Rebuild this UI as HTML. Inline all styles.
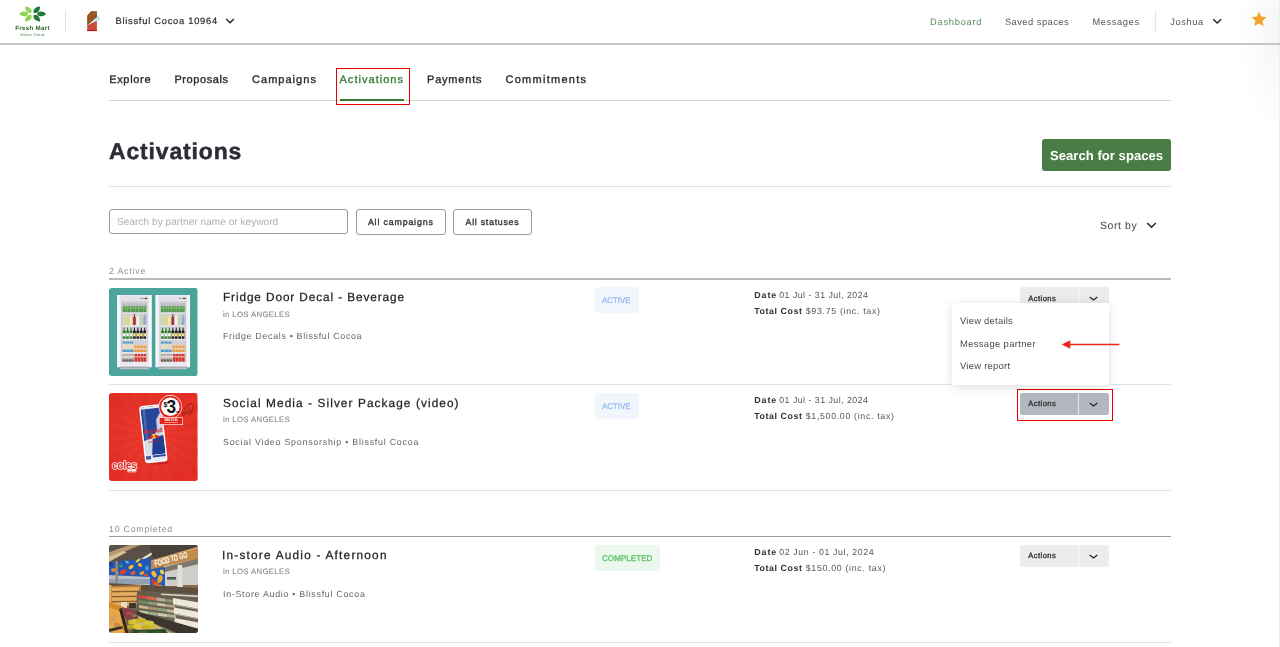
<!DOCTYPE html>
<html lang="en">
<head>
<meta charset="utf-8">
<title>Activations</title>
<style>
html,body{margin:0;padding:0;background:#fff;}
body{width:1280px;height:647px;overflow:hidden;position:relative;font-family:"Liberation Sans",sans-serif;}
.t{position:absolute;white-space:nowrap;line-height:1;text-rendering:geometricPrecision;}
.b{position:absolute;}
.ln{position:absolute;left:108.6px;width:1062.6px;height:1px;background:#e2e2e2;}
.img{position:absolute;left:109px;width:88.5px;height:88.4px;border-radius:3px;overflow:hidden;}
.img svg{display:block;width:100%;height:100%;}
.badge{position:absolute;left:594.5px;height:26px;border-radius:3px;}
.act{position:absolute;left:1019.6px;width:89.4px;height:22.3px;border-radius:2.5px;background:#ececec;}
.act i{position:absolute;left:58.2px;top:0;width:1.2px;height:100%;background:#fafafa;}
.rb{position:absolute;box-sizing:border-box;border:1.5px solid #e80000;}
svg{position:absolute;overflow:visible;}
</style>
</head>
<body>
<!-- right edge shade -->
<div class="b" style="left:1160px;top:0;width:120px;height:160px;background:radial-gradient(ellipse 42px 100px at 120px 35px,rgba(0,0,0,0.04) 0%,rgba(0,0,0,0.018) 50%,rgba(0,0,0,0) 100%);"></div>
<div class="b" style="left:1279px;top:0;width:1px;height:647px;background:#efefef;"></div>

<!-- header -->
<div class="b" style="left:0;top:43px;width:1280px;height:1.5px;background:#c6c6c6;"></div>
<svg style="left:0;top:0" width="60" height="40" viewBox="0 0 60 40"><path transform="rotate(180 32.6 13.9) translate(32.6 13.9)" d="M4.3,0 C5.8,-3.1 10.35,-3.1 13.4,0 C10.35,3.1 5.8,3.1 4.3,0Z" fill="#8fd352"/><path transform="rotate(-135 32.6 13.9) translate(32.6 13.9)" d="M1.6,0 C3.1,-3.1 7.6,-3.1 10.6,0 C7.6,3.1 3.1,3.1 1.6,0Z" fill="#8fd352"/><path transform="rotate(135 32.6 13.9) translate(32.6 13.9)" d="M1.6,0 C3.1,-3.1 7.6,-3.1 10.6,0 C7.6,3.1 3.1,3.1 1.6,0Z" fill="#8fd352"/><path transform="rotate(0 32.6 13.9) translate(32.6 13.9)" d="M4.3,0 C5.8,-3.1 10.35,-3.1 13.4,0 C10.35,3.1 5.8,3.1 4.3,0Z" fill="#1e7a33"/><path transform="rotate(-45 32.6 13.9) translate(32.6 13.9)" d="M1.6,0 C3.1,-3.1 7.6,-3.1 10.6,0 C7.6,3.1 3.1,3.1 1.6,0Z" fill="#1e7a33"/><path transform="rotate(45 32.6 13.9) translate(32.6 13.9)" d="M1.6,0 C3.1,-3.1 7.6,-3.1 10.6,0 C7.6,3.1 3.1,3.1 1.6,0Z" fill="#1e7a33"/></svg>
<div class="b" style="left:65px;top:10px;width:1px;height:22px;background:#e4e4e4;"></div>
<svg style="left:0;top:0" width="110" height="40" viewBox="0 0 110 40"><polygon points="96.9,14.6 100.7,18.7 96.9,21.6 88,25.3 90,22" fill="#c4e7ef"/><polygon points="87.2,15.6 91.3,11.2 96.9,11.2 96.9,16.9 87.2,25.2" fill="#8a4b17"/><path d="M88.6,16.6 91.6,13.2 91.6,16.2 88.6,19.4Z M92.5,12.4 95.8,12.4 95.8,15.4 92.5,15.6Z M88.6,20.6 91.6,17.4 91.6,19.6 88.6,22.6Z M92.5,16.8 95.8,16.4 95.8,16.6 92.5,19Z" fill="#a8632c"/><polygon points="87.2,25.3 96.9,21.1 96.9,31.1 87.2,31.1" fill="#c94c3d"/><rect x="87.2" y="30" width="9.7" height="1.1" fill="#b21d12"/></svg>
<svg style="left:225px;top:17px" width="10" height="8" viewBox="0 0 10 8"><polyline points="1.2,2 5,5.8 8.8,2" fill="none" stroke="#222" stroke-width="1.4"/></svg>
<div class="b" style="left:1155px;top:10.7px;width:1px;height:21px;background:#e4e4e4;"></div>
<svg style="left:1212px;top:17px" width="10" height="8" viewBox="0 0 10 8"><polyline points="1.2,2.2 5.2,6 9.2,2.2" fill="none" stroke="#222" stroke-width="1.4"/></svg>
<svg style="left:1251px;top:11px" width="16" height="16" viewBox="0 0 16 16"><polygon points="8,0.6 10.2,5.6 15.6,6.2 11.5,9.8 12.7,15.1 8,12.4 3.3,15.1 4.5,9.8 0.4,6.2 5.8,5.6" fill="#f0a62e"/></svg>

<!-- tabs -->
<div class="ln" style="top:100px;background:#d6d6d6;"></div>
<div class="b" style="left:339.5px;top:99.2px;width:64px;height:1.5px;background:#3a7d34;"></div>
<div class="rb" style="left:336px;top:68px;width:74px;height:37px;"></div>

<!-- heading -->
<div class="b" style="left:1041.5px;top:139px;width:129.7px;height:31.5px;border-radius:3px;background:#4a7c45;"></div>
<div class="ln" style="top:186px;"></div>

<!-- filters -->
<div class="b" style="left:108.5px;top:209px;width:239.5px;height:24.6px;box-sizing:border-box;border:1px solid #9a9a9a;border-radius:3px;"></div>
<div class="b" style="left:355.6px;top:209px;width:90px;height:25.6px;box-sizing:border-box;border:1px solid #9a9a9a;border-radius:3px;"></div>
<div class="b" style="left:453.2px;top:209px;width:78.8px;height:25.6px;box-sizing:border-box;border:1px solid #9a9a9a;border-radius:3px;"></div>
<svg style="left:1145.5px;top:221px" width="11" height="8" viewBox="0 0 11 8"><polyline points="1.2,2 5.5,6.2 9.8,2" fill="none" stroke="#222" stroke-width="1.5"/></svg>

<!-- section lines -->
<div class="ln" style="top:278.3px;height:1.7px;background:#b9b9b9;"></div>
<div class="ln" style="top:384px;"></div>
<div class="ln" style="top:490px;"></div>
<div class="ln" style="top:536px;background:#9a9a9a;"></div>
<div class="ln" style="top:642px;"></div>

<!-- images -->
<div class="img" style="top:287.5px;"><svg viewBox="0 0 88.5 88.4" preserveAspectRatio="none" style="position:static"><rect width="88.5" height="88.4" fill="#4ba59b"/><rect x="8.2" y="7" width="34.4" height="72.2" fill="#ebe9f1"/><rect x="8.2" y="7" width="2.6" height="72.2" fill="#f7f6fa"/><rect x="39.99999999999999" y="7" width="2.6" height="72.2" fill="#f7f6fa"/><rect x="10.799999999999999" y="8.2" width="29.2" height="4.6" fill="#e2e0ea"/><rect x="31.599999999999994" y="10" width="1.6" height="1" fill="#e07070"/><rect x="33.39999999999999" y="10" width="1.6" height="1" fill="#70c070"/><rect x="35.599999999999994" y="9.9" width="2.6" height="1.2" fill="#333"/><rect x="38.199999999999996" y="9.9" width="1.2" height="1.2" fill="#e8d040"/><rect x="11.2" y="78.6" width="28.4" height="2.6" fill="#a9a9af"/><rect x="11.2" y="80.4" width="28.4" height="0.8" fill="#c9c9cf"/><rect x="12.2" y="13.4" width="26.4" height="60.6" fill="#c3c5cb"/><rect x="13.0" y="14.2" width="24.799999999999997" height="59" fill="#cfd1d6"/><rect x="12.799999999999999" y="24.3" width="25.2" height="1.3" fill="#e6e8ee"/><rect x="12.799999999999999" y="37.2" width="25.2" height="1.3" fill="#e6e8ee"/><rect x="12.799999999999999" y="50.9" width="25.2" height="1.3" fill="#e6e8ee"/><rect x="12.799999999999999" y="64.2" width="25.2" height="1.3" fill="#e6e8ee"/><rect x="13.65" y="15.4" width="2.17" height="3" fill="#b9bcc2"/><rect x="13.55" y="18.2" width="2.37" height="6" fill="#4f9a48"/><rect x="13.55" y="19.2" width="2.37" height="1.6" fill="#7ab86a"/><rect x="16.32" y="15.4" width="2.17" height="3" fill="#b9bcc2"/><rect x="16.22" y="18.2" width="2.37" height="6" fill="#4f9a48"/><rect x="16.22" y="19.2" width="2.37" height="1.6" fill="#7ab86a"/><rect x="18.98" y="15.4" width="2.17" height="3" fill="#b9bcc2"/><rect x="18.88" y="18.2" width="2.37" height="6" fill="#4f9a48"/><rect x="18.88" y="19.2" width="2.37" height="1.6" fill="#7ab86a"/><rect x="21.65" y="15.4" width="2.17" height="3" fill="#b9bcc2"/><rect x="21.55" y="18.2" width="2.37" height="6" fill="#4f9a48"/><rect x="21.55" y="19.2" width="2.37" height="1.6" fill="#7ab86a"/><rect x="24.32" y="15.4" width="2.17" height="3" fill="#b9bcc2"/><rect x="24.22" y="18.2" width="2.37" height="6" fill="#4f9a48"/><rect x="24.22" y="19.2" width="2.37" height="1.6" fill="#7ab86a"/><rect x="26.98" y="15.4" width="2.17" height="3" fill="#b9bcc2"/><rect x="26.88" y="18.2" width="2.37" height="6" fill="#4f9a48"/><rect x="26.88" y="19.2" width="2.37" height="1.6" fill="#7ab86a"/><rect x="29.65" y="15.4" width="2.17" height="3" fill="#b9bcc2"/><rect x="29.55" y="18.2" width="2.37" height="6" fill="#4f9a48"/><rect x="29.55" y="19.2" width="2.37" height="1.6" fill="#7ab86a"/><rect x="32.32" y="15.4" width="2.17" height="3" fill="#b9bcc2"/><rect x="32.22" y="18.2" width="2.37" height="6" fill="#4f9a48"/><rect x="32.22" y="19.2" width="2.37" height="1.6" fill="#7ab86a"/><rect x="34.98" y="15.4" width="2.17" height="3" fill="#b9bcc2"/><rect x="34.88" y="18.2" width="2.37" height="6" fill="#4f9a48"/><rect x="34.88" y="19.2" width="2.37" height="1.6" fill="#7ab86a"/><rect x="14.50" y="26.2" width="1.23" height="3.4" fill="#c9dcaa"/><rect x="13.75" y="29" width="2.73" height="8" rx="0.6" fill="#c9dcaa"/><rect x="17.93" y="26.2" width="1.23" height="3.4" fill="#ead27a"/><rect x="17.18" y="29" width="2.73" height="8" rx="0.6" fill="#ead27a"/><rect x="21.36" y="26.2" width="1.23" height="3.4" fill="#efe3b0"/><rect x="20.61" y="29" width="2.73" height="8" rx="0.6" fill="#efe3b0"/><rect x="24.79" y="26.2" width="1.23" height="3.4" fill="#a83232"/><rect x="24.04" y="29" width="2.73" height="8" rx="0.6" fill="#a83232"/><rect x="28.21" y="26.2" width="1.23" height="3.4" fill="#f0eeee"/><rect x="27.46" y="29" width="2.73" height="8" rx="0.6" fill="#f0eeee"/><rect x="31.64" y="26.2" width="1.23" height="3.4" fill="#bdd6a2"/><rect x="30.89" y="29" width="2.73" height="8" rx="0.6" fill="#bdd6a2"/><rect x="35.07" y="26.2" width="1.23" height="3.4" fill="#8eaad6"/><rect x="34.32" y="29" width="2.73" height="8" rx="0.6" fill="#8eaad6"/><rect x="14.60" y="39.6" width="1.03" height="3.6" fill="#2f7d2a"/><rect x="13.80" y="42.6" width="2.63" height="8.2" rx="0.6" fill="#2f7d2a"/><rect x="13.80" y="45.2" width="2.63" height="3.2" fill="#f4f4f0"/><rect x="18.03" y="39.6" width="1.03" height="3.6" fill="#2f7d2a"/><rect x="17.23" y="42.6" width="2.63" height="8.2" rx="0.6" fill="#2f7d2a"/><rect x="17.23" y="45.2" width="2.63" height="3.2" fill="#f4f4f0"/><rect x="21.46" y="39.6" width="1.03" height="3.6" fill="#2f7d2a"/><rect x="20.66" y="42.6" width="2.63" height="8.2" rx="0.6" fill="#2f7d2a"/><rect x="20.66" y="45.2" width="2.63" height="3.2" fill="#f4f4f0"/><rect x="24.89" y="39.6" width="1.03" height="3.6" fill="#1c1c1c"/><rect x="24.09" y="42.6" width="2.63" height="8.2" rx="0.6" fill="#1c1c1c"/><rect x="24.09" y="45.2" width="2.63" height="3.2" fill="#efe08a"/><rect x="28.31" y="39.6" width="1.03" height="3.6" fill="#1c1c1c"/><rect x="27.51" y="42.6" width="2.63" height="8.2" rx="0.6" fill="#1c1c1c"/><rect x="27.51" y="45.2" width="2.63" height="3.2" fill="#efe08a"/><rect x="31.74" y="39.6" width="1.03" height="3.6" fill="#1c1c1c"/><rect x="30.94" y="42.6" width="2.63" height="8.2" rx="0.6" fill="#1c1c1c"/><rect x="30.94" y="45.2" width="2.63" height="3.2" fill="#efe08a"/><rect x="35.17" y="39.6" width="1.03" height="3.6" fill="#1c1c1c"/><rect x="34.37" y="42.6" width="2.63" height="8.2" rx="0.6" fill="#1c1c1c"/><rect x="34.37" y="45.2" width="2.63" height="3.2" fill="#efe08a"/><rect x="13.60" y="53.6" width="3.28" height="10.4" fill="#e6ddc8"/><rect x="13.60" y="53.6" width="3.28" height="2" fill="#4a9bd2"/><rect x="13.60" y="61.6" width="3.28" height="2.4" fill="#4a9bd2"/><rect x="17.28" y="53.6" width="3.28" height="10.4" fill="#e6ddc8"/><rect x="17.28" y="53.6" width="3.28" height="2" fill="#4a9bd2"/><rect x="17.28" y="61.6" width="3.28" height="2.4" fill="#4a9bd2"/><rect x="20.96" y="53.6" width="3.28" height="10.4" fill="#e6ddc8"/><rect x="20.96" y="53.6" width="3.28" height="2" fill="#4a9bd2"/><rect x="20.96" y="61.6" width="3.28" height="2.4" fill="#4a9bd2"/><rect x="25.12" y="56.6" width="2.72" height="7.4" fill="#f0c9a0"/><rect x="25.12" y="58" width="2.72" height="1.6" fill="#e8973e"/><rect x="25.12" y="61.8" width="2.72" height="2.2" fill="#e8973e"/><rect x="28.24" y="56.6" width="2.72" height="7.4" fill="#f0c9a0"/><rect x="28.24" y="58" width="2.72" height="1.6" fill="#e8973e"/><rect x="28.24" y="61.8" width="2.72" height="2.2" fill="#e8973e"/><rect x="31.36" y="56.6" width="2.72" height="7.4" fill="#f0c9a0"/><rect x="31.36" y="58" width="2.72" height="1.6" fill="#e8973e"/><rect x="31.36" y="61.8" width="2.72" height="2.2" fill="#e8973e"/><rect x="34.48" y="56.6" width="2.72" height="7.4" fill="#f0c9a0"/><rect x="34.48" y="58" width="2.72" height="1.6" fill="#e8973e"/><rect x="34.48" y="61.8" width="2.72" height="2.2" fill="#e8973e"/><rect x="13.60" y="66" width="2.48" height="7.6" fill="#b9aea6"/><rect x="13.60" y="68" width="2.48" height="1.6" fill="#e9e4e0"/><rect x="13.60" y="71.4" width="2.48" height="2.2" fill="#6e635c"/><rect x="16.48" y="66" width="2.48" height="7.6" fill="#b9aea6"/><rect x="16.48" y="68" width="2.48" height="1.6" fill="#e9e4e0"/><rect x="16.48" y="71.4" width="2.48" height="2.2" fill="#6e635c"/><rect x="19.36" y="66" width="2.48" height="7.6" fill="#b9aea6"/><rect x="19.36" y="68" width="2.48" height="1.6" fill="#e9e4e0"/><rect x="19.36" y="71.4" width="2.48" height="2.2" fill="#6e635c"/><rect x="22.24" y="66" width="2.48" height="7.6" fill="#b9aea6"/><rect x="22.24" y="68" width="2.48" height="1.6" fill="#e9e4e0"/><rect x="22.24" y="71.4" width="2.48" height="2.2" fill="#6e635c"/><rect x="25.60" y="66" width="2.60" height="7.6" fill="#d8342c"/><rect x="25.60" y="68" width="2.60" height="1.4" fill="#f0b0a8"/><rect x="28.60" y="66" width="2.60" height="7.6" fill="#d8342c"/><rect x="28.60" y="68" width="2.60" height="1.4" fill="#f0b0a8"/><rect x="31.60" y="66" width="2.60" height="7.6" fill="#d8342c"/><rect x="31.60" y="68" width="2.60" height="1.4" fill="#f0b0a8"/><rect x="34.60" y="66" width="2.60" height="7.6" fill="#d8342c"/><rect x="34.60" y="68" width="2.60" height="1.4" fill="#f0b0a8"/><rect x="46.6" y="7" width="34.4" height="72.2" fill="#ebe9f1"/><rect x="46.6" y="7" width="2.6" height="72.2" fill="#f7f6fa"/><rect x="78.4" y="7" width="2.6" height="72.2" fill="#f7f6fa"/><rect x="49.2" y="8.2" width="29.2" height="4.6" fill="#e2e0ea"/><rect x="70.0" y="10" width="1.6" height="1" fill="#e07070"/><rect x="71.8" y="10" width="1.6" height="1" fill="#70c070"/><rect x="74.0" y="9.9" width="2.6" height="1.2" fill="#333"/><rect x="76.6" y="9.9" width="1.2" height="1.2" fill="#e8d040"/><rect x="49.6" y="78.6" width="28.4" height="2.6" fill="#a9a9af"/><rect x="49.6" y="80.4" width="28.4" height="0.8" fill="#c9c9cf"/><rect x="50.6" y="13.4" width="26.4" height="60.6" fill="#c3c5cb"/><rect x="51.4" y="14.2" width="24.799999999999997" height="59" fill="#cfd1d6"/><rect x="51.2" y="24.3" width="25.2" height="1.3" fill="#e6e8ee"/><rect x="51.2" y="37.2" width="25.2" height="1.3" fill="#e6e8ee"/><rect x="51.2" y="50.9" width="25.2" height="1.3" fill="#e6e8ee"/><rect x="51.2" y="64.2" width="25.2" height="1.3" fill="#e6e8ee"/><rect x="52.05" y="15.4" width="2.17" height="3" fill="#b9bcc2"/><rect x="51.95" y="18.2" width="2.37" height="6" fill="#4f9a48"/><rect x="51.95" y="19.2" width="2.37" height="1.6" fill="#7ab86a"/><rect x="54.72" y="15.4" width="2.17" height="3" fill="#b9bcc2"/><rect x="54.62" y="18.2" width="2.37" height="6" fill="#4f9a48"/><rect x="54.62" y="19.2" width="2.37" height="1.6" fill="#7ab86a"/><rect x="57.38" y="15.4" width="2.17" height="3" fill="#b9bcc2"/><rect x="57.28" y="18.2" width="2.37" height="6" fill="#4f9a48"/><rect x="57.28" y="19.2" width="2.37" height="1.6" fill="#7ab86a"/><rect x="60.05" y="15.4" width="2.17" height="3" fill="#b9bcc2"/><rect x="59.95" y="18.2" width="2.37" height="6" fill="#4f9a48"/><rect x="59.95" y="19.2" width="2.37" height="1.6" fill="#7ab86a"/><rect x="62.72" y="15.4" width="2.17" height="3" fill="#b9bcc2"/><rect x="62.62" y="18.2" width="2.37" height="6" fill="#4f9a48"/><rect x="62.62" y="19.2" width="2.37" height="1.6" fill="#7ab86a"/><rect x="65.38" y="15.4" width="2.17" height="3" fill="#b9bcc2"/><rect x="65.28" y="18.2" width="2.37" height="6" fill="#4f9a48"/><rect x="65.28" y="19.2" width="2.37" height="1.6" fill="#7ab86a"/><rect x="68.05" y="15.4" width="2.17" height="3" fill="#b9bcc2"/><rect x="67.95" y="18.2" width="2.37" height="6" fill="#4f9a48"/><rect x="67.95" y="19.2" width="2.37" height="1.6" fill="#7ab86a"/><rect x="70.72" y="15.4" width="2.17" height="3" fill="#b9bcc2"/><rect x="70.62" y="18.2" width="2.37" height="6" fill="#4f9a48"/><rect x="70.62" y="19.2" width="2.37" height="1.6" fill="#7ab86a"/><rect x="73.38" y="15.4" width="2.17" height="3" fill="#b9bcc2"/><rect x="73.28" y="18.2" width="2.37" height="6" fill="#4f9a48"/><rect x="73.28" y="19.2" width="2.37" height="1.6" fill="#7ab86a"/><rect x="52.90" y="26.2" width="1.23" height="3.4" fill="#c9dcaa"/><rect x="52.15" y="29" width="2.73" height="8" rx="0.6" fill="#c9dcaa"/><rect x="56.33" y="26.2" width="1.23" height="3.4" fill="#ead27a"/><rect x="55.58" y="29" width="2.73" height="8" rx="0.6" fill="#ead27a"/><rect x="59.76" y="26.2" width="1.23" height="3.4" fill="#efe3b0"/><rect x="59.01" y="29" width="2.73" height="8" rx="0.6" fill="#efe3b0"/><rect x="63.19" y="26.2" width="1.23" height="3.4" fill="#a83232"/><rect x="62.44" y="29" width="2.73" height="8" rx="0.6" fill="#a83232"/><rect x="66.61" y="26.2" width="1.23" height="3.4" fill="#f0eeee"/><rect x="65.86" y="29" width="2.73" height="8" rx="0.6" fill="#f0eeee"/><rect x="70.04" y="26.2" width="1.23" height="3.4" fill="#bdd6a2"/><rect x="69.29" y="29" width="2.73" height="8" rx="0.6" fill="#bdd6a2"/><rect x="73.47" y="26.2" width="1.23" height="3.4" fill="#8eaad6"/><rect x="72.72" y="29" width="2.73" height="8" rx="0.6" fill="#8eaad6"/><rect x="53.00" y="39.6" width="1.03" height="3.6" fill="#2f7d2a"/><rect x="52.20" y="42.6" width="2.63" height="8.2" rx="0.6" fill="#2f7d2a"/><rect x="52.20" y="45.2" width="2.63" height="3.2" fill="#f4f4f0"/><rect x="56.43" y="39.6" width="1.03" height="3.6" fill="#2f7d2a"/><rect x="55.63" y="42.6" width="2.63" height="8.2" rx="0.6" fill="#2f7d2a"/><rect x="55.63" y="45.2" width="2.63" height="3.2" fill="#f4f4f0"/><rect x="59.86" y="39.6" width="1.03" height="3.6" fill="#2f7d2a"/><rect x="59.06" y="42.6" width="2.63" height="8.2" rx="0.6" fill="#2f7d2a"/><rect x="59.06" y="45.2" width="2.63" height="3.2" fill="#f4f4f0"/><rect x="63.29" y="39.6" width="1.03" height="3.6" fill="#1c1c1c"/><rect x="62.49" y="42.6" width="2.63" height="8.2" rx="0.6" fill="#1c1c1c"/><rect x="62.49" y="45.2" width="2.63" height="3.2" fill="#efe08a"/><rect x="66.71" y="39.6" width="1.03" height="3.6" fill="#1c1c1c"/><rect x="65.91" y="42.6" width="2.63" height="8.2" rx="0.6" fill="#1c1c1c"/><rect x="65.91" y="45.2" width="2.63" height="3.2" fill="#efe08a"/><rect x="70.14" y="39.6" width="1.03" height="3.6" fill="#1c1c1c"/><rect x="69.34" y="42.6" width="2.63" height="8.2" rx="0.6" fill="#1c1c1c"/><rect x="69.34" y="45.2" width="2.63" height="3.2" fill="#efe08a"/><rect x="73.57" y="39.6" width="1.03" height="3.6" fill="#1c1c1c"/><rect x="72.77" y="42.6" width="2.63" height="8.2" rx="0.6" fill="#1c1c1c"/><rect x="72.77" y="45.2" width="2.63" height="3.2" fill="#efe08a"/><rect x="52.00" y="53.6" width="3.28" height="10.4" fill="#e6ddc8"/><rect x="52.00" y="53.6" width="3.28" height="2" fill="#4a9bd2"/><rect x="52.00" y="61.6" width="3.28" height="2.4" fill="#4a9bd2"/><rect x="55.68" y="53.6" width="3.28" height="10.4" fill="#e6ddc8"/><rect x="55.68" y="53.6" width="3.28" height="2" fill="#4a9bd2"/><rect x="55.68" y="61.6" width="3.28" height="2.4" fill="#4a9bd2"/><rect x="59.36" y="53.6" width="3.28" height="10.4" fill="#e6ddc8"/><rect x="59.36" y="53.6" width="3.28" height="2" fill="#4a9bd2"/><rect x="59.36" y="61.6" width="3.28" height="2.4" fill="#4a9bd2"/><rect x="63.52" y="56.6" width="2.72" height="7.4" fill="#f0c9a0"/><rect x="63.52" y="58" width="2.72" height="1.6" fill="#e8973e"/><rect x="63.52" y="61.8" width="2.72" height="2.2" fill="#e8973e"/><rect x="66.64" y="56.6" width="2.72" height="7.4" fill="#f0c9a0"/><rect x="66.64" y="58" width="2.72" height="1.6" fill="#e8973e"/><rect x="66.64" y="61.8" width="2.72" height="2.2" fill="#e8973e"/><rect x="69.76" y="56.6" width="2.72" height="7.4" fill="#f0c9a0"/><rect x="69.76" y="58" width="2.72" height="1.6" fill="#e8973e"/><rect x="69.76" y="61.8" width="2.72" height="2.2" fill="#e8973e"/><rect x="72.88" y="56.6" width="2.72" height="7.4" fill="#f0c9a0"/><rect x="72.88" y="58" width="2.72" height="1.6" fill="#e8973e"/><rect x="72.88" y="61.8" width="2.72" height="2.2" fill="#e8973e"/><rect x="52.00" y="66" width="2.48" height="7.6" fill="#b9aea6"/><rect x="52.00" y="68" width="2.48" height="1.6" fill="#e9e4e0"/><rect x="52.00" y="71.4" width="2.48" height="2.2" fill="#6e635c"/><rect x="54.88" y="66" width="2.48" height="7.6" fill="#b9aea6"/><rect x="54.88" y="68" width="2.48" height="1.6" fill="#e9e4e0"/><rect x="54.88" y="71.4" width="2.48" height="2.2" fill="#6e635c"/><rect x="57.76" y="66" width="2.48" height="7.6" fill="#b9aea6"/><rect x="57.76" y="68" width="2.48" height="1.6" fill="#e9e4e0"/><rect x="57.76" y="71.4" width="2.48" height="2.2" fill="#6e635c"/><rect x="60.64" y="66" width="2.48" height="7.6" fill="#b9aea6"/><rect x="60.64" y="68" width="2.48" height="1.6" fill="#e9e4e0"/><rect x="60.64" y="71.4" width="2.48" height="2.2" fill="#6e635c"/><rect x="64.00" y="66" width="2.60" height="7.6" fill="#d8342c"/><rect x="64.00" y="68" width="2.60" height="1.4" fill="#f0b0a8"/><rect x="67.00" y="66" width="2.60" height="7.6" fill="#d8342c"/><rect x="67.00" y="68" width="2.60" height="1.4" fill="#f0b0a8"/><rect x="70.00" y="66" width="2.60" height="7.6" fill="#d8342c"/><rect x="70.00" y="68" width="2.60" height="1.4" fill="#f0b0a8"/><rect x="73.00" y="66" width="2.60" height="7.6" fill="#d8342c"/><rect x="73.00" y="68" width="2.60" height="1.4" fill="#f0b0a8"/></svg></div>
<div class="img" style="top:393.1px;"><svg viewBox="0 0 88.5 88.4" preserveAspectRatio="none" style="position:static"><defs><clipPath id="canc"><rect x="-10" y="-27.5" width="20" height="55" rx="2.4"/></clipPath><radialGradient id="rbg" cx="50%" cy="48%" r="60%"><stop offset="0" stop-color="#ee3d33"/><stop offset="1" stop-color="#e32f25"/></radialGradient></defs><rect width="88.5" height="88.4" fill="url(#rbg)"/><polygon points="44,42 134.0,42.0 132.9,56.1" fill="#d92a20" opacity="0.22"/><polygon points="44,42 129.6,69.8 124.2,82.9" fill="#d92a20" opacity="0.22"/><polygon points="44,42 116.8,94.9 107.6,105.6" fill="#d92a20" opacity="0.22"/><polygon points="44,42 96.9,114.8 84.9,122.2" fill="#d92a20" opacity="0.22"/><polygon points="44,42 71.8,127.6 58.1,130.9" fill="#d92a20" opacity="0.22"/><polygon points="44,42 44.0,132.0 29.9,130.9" fill="#d92a20" opacity="0.22"/><polygon points="44,42 16.2,127.6 3.1,122.2" fill="#d92a20" opacity="0.22"/><polygon points="44,42 -8.9,114.8 -19.6,105.6" fill="#d92a20" opacity="0.22"/><polygon points="44,42 -28.8,94.9 -36.2,82.9" fill="#d92a20" opacity="0.22"/><polygon points="44,42 -41.6,69.8 -44.9,56.1" fill="#d92a20" opacity="0.22"/><polygon points="44,42 -46.0,42.0 -44.9,27.9" fill="#d92a20" opacity="0.22"/><polygon points="44,42 -41.6,14.2 -36.2,1.1" fill="#d92a20" opacity="0.22"/><polygon points="44,42 -28.8,-10.9 -19.6,-21.6" fill="#d92a20" opacity="0.22"/><polygon points="44,42 -8.9,-30.8 3.1,-38.2" fill="#d92a20" opacity="0.22"/><polygon points="44,42 16.2,-43.6 29.9,-46.9" fill="#d92a20" opacity="0.22"/><polygon points="44,42 44.0,-48.0 58.1,-46.9" fill="#d92a20" opacity="0.22"/><polygon points="44,42 71.8,-43.6 84.9,-38.2" fill="#d92a20" opacity="0.22"/><polygon points="44,42 96.9,-30.8 107.6,-21.6" fill="#d92a20" opacity="0.22"/><polygon points="44,42 116.8,-10.9 124.2,1.1" fill="#d92a20" opacity="0.22"/><polygon points="44,42 129.6,14.2 132.9,27.9" fill="#d92a20" opacity="0.22"/><ellipse cx="48" cy="69.5" rx="12" ry="2" fill="#a81810" opacity="0.5"/><g transform="translate(44.3 40.8) rotate(-6.5)"><rect x="-11.3" y="-28.8" width="22.6" height="57.6" rx="3.4" fill="#fff"/><g clip-path="url(#canc)"><rect x="-10" y="-27.5" width="20" height="55" fill="#d5dae4"/><polygon points="-10,-27.5 10,-27.5 10,-12 -1,4 -10,6" fill="#27479a"/><polygon points="10,-22 10,-2 4,2 4.4,-14" fill="#c9d0de"/><polygon points="-1,4 10,2 10,21 -3.5,21" fill="#1f3f92"/><rect x="-10" y="-27.5" width="20" height="2.2" fill="#e8ebf1"/><rect x="-10" y="21" width="20" height="6.5" fill="#e9edf4"/><rect x="-3" y="21.6" width="13" height="2" fill="#2c4c9c"/><rect x="-10" y="21.6" width="5" height="3.4" fill="#3a5aa8"/><rect x="-8" y="-25" width="2.2" height="46" fill="#fff" opacity="0.18"/><circle cx="0.3" cy="2.6" r="2.5" fill="#f0c020"/><path d="M-6.5,3.6 L-1,1.2 L-0.6,3.4 L-4,5Z M7,3.2 L1.6,1.2 L1.2,3.4 L4.6,4.8Z" fill="#d2202a"/><text x="0" y="-0.8" text-anchor="middle" font-family="Liberation Sans,sans-serif" font-weight="700" font-size="6" fill="#d2202a" textLength="19.6" lengthAdjust="spacingAndGlyphs">Red Bull</text><rect x="-6" y="7.4" width="12" height="0.9" fill="#d2202a" opacity="0.7"/></g></g><circle cx="61.3" cy="13.8" r="11.7" fill="#fff"/><circle cx="61.3" cy="13.8" r="11.1" fill="#e2231a"/><circle cx="61.3" cy="13.8" r="9.3" fill="#fff"/><text x="54.6" y="14.4" font-family="Liberation Sans,sans-serif" font-weight="700" font-size="7" fill="#111">$</text><text x="57.6" y="20.4" font-family="Liberation Sans,sans-serif" font-weight="700" font-size="17.5" fill="#111" textLength="9.6" lengthAdjust="spacingAndGlyphs">3</text><text x="67" y="20" font-family="Liberation Sans,sans-serif" font-weight="700" font-size="2.6" fill="#111">ea</text><rect x="50" y="24.2" width="24" height="7.6" fill="#fff"/><rect x="50.6" y="24.8" width="22.8" height="6.4" fill="#e2231a"/><text x="62" y="28" text-anchor="middle" font-family="Liberation Sans,sans-serif" font-weight="700" font-size="2.6" fill="#fff">WAS $3.80</text><rect x="55" y="29" width="14" height="0.7" fill="#f5b0aa"/><path d="M73.2,21.6 L76.4,14.8 L78.6,12 L81.8,10.6 L84.2,12.6 L84,15.6 L82.6,18.6 L80.2,21.6 L78.4,20.4 L77.2,18.2 L74.6,22.6Z" fill="#e0352b" stroke="#8c1610" stroke-width="0.8" stroke-linejoin="round"/><path d="M79.4,19.6 L81.2,16 M80.9,20.4 L82.6,16.8 M78.2,17.6 L79.6,14.4" stroke="#8c1610" stroke-width="0.6" fill="none"/><text x="3.2" y="76.2" font-family="Liberation Sans,sans-serif" font-weight="700" font-size="10.5" fill="#e2231a" stroke="#fff" stroke-width="1.5" paint-order="stroke" stroke-linejoin="round" textLength="24.6" lengthAdjust="spacingAndGlyphs">coles</text><rect x="18.4" y="76.6" width="9" height="2.6" rx="1" fill="#fff"/><text x="22.9" y="78.7" text-anchor="middle" font-family="Liberation Sans,sans-serif" font-weight="700" font-size="2.2" fill="#e2231a">express</text></svg></div>
<div class="img" style="top:545.1px;"><svg viewBox="0 0 88.5 88.4" preserveAspectRatio="none" style="position:static"><defs><filter id="sb" x="-5%" y="-5%" width="110%" height="110%"><feGaussianBlur stdDeviation="0.55"/></filter><filter id="sb2" x="-5%" y="-5%" width="110%" height="110%"><feGaussianBlur stdDeviation="0.9"/></filter></defs><rect width="88.5" height="88.4" fill="#6a5f52"/><g filter="url(#sb)"><rect x="-2" y="-2" width="93" height="20" fill="#5b5148"/><polygon points="-2,8 26,-2 36,-2 -2,14" fill="#b89a72"/><polygon points="-2,13 14,6 18,7 -2,18" fill="#d8c29a"/><polygon points="30,15 58,-2 61,-2 33,16" fill="#e8e6de"/><polygon points="40,-2 90,-2 90,3 44,14" fill="#4a423b"/><rect x="-2" y="28" width="46" height="12" fill="#b9bec4"/><rect x="-2" y="34" width="44" height="5" fill="#8fa0b4"/><polygon points="55,20 90,11 90,46 55,46" fill="#cfcfca"/><polygon points="56,22 90,13 90,19 56,27" fill="#7d766c"/><rect x="68.6" y="20" width="4.6" height="26" fill="#e4e0d6"/><rect x="58" y="32" width="9" height="2.6" fill="#555"/><rect x="74" y="40" width="16" height="5" fill="#8a6a48"/><rect x="56" y="41" width="12" height="4" fill="#9a5a30"/><polygon points="-2,17.5 42,13 42,32 -2,30" fill="#2857b4"/><ellipse cx="5" cy="25" rx="3.15" ry="1.82" fill="#e8862a" transform="rotate(1 5 25)"/><ellipse cx="14" cy="27" rx="3.50" ry="2.10" fill="#d8402a" transform="rotate(-21 14 27)"/><ellipse cx="12" cy="21" rx="2.10" ry="1.40" fill="#38a060" transform="rotate(10 12 21)"/><ellipse cx="22" cy="22" rx="2.80" ry="1.82" fill="#f0c030" transform="rotate(-34 22 22)"/><ellipse cx="24" cy="28" rx="2.80" ry="1.68" fill="#e05a2a" transform="rotate(-31 24 28)"/><ellipse cx="31" cy="20" rx="2.38" ry="1.68" fill="#f0b428" transform="rotate(28 31 20)"/><ellipse cx="33" cy="28" rx="2.52" ry="1.68" fill="#e8a028" transform="rotate(-28 33 28)"/><ellipse cx="38" cy="23" rx="2.10" ry="2.38" fill="#3a9adc" transform="rotate(6 38 23)"/><ellipse cx="18" cy="17" rx="2.10" ry="1.12" fill="#58b8e8" transform="rotate(34 18 17)"/><ellipse cx="29" cy="15.5" rx="2.80" ry="1.12" fill="#f0d040" transform="rotate(-33 29 15.5)"/><ellipse cx="2" cy="19" rx="1.68" ry="1.40" fill="#1a3a8a" transform="rotate(24 2 19)"/><ellipse cx="37" cy="30" rx="2.10" ry="1.12" fill="#e84a30" transform="rotate(-13 37 30)"/><ellipse cx="8" cy="29" rx="2.10" ry="0.84" fill="#f0e080" transform="rotate(-36 8 29)"/><rect x="6.4" y="16" width="2.6" height="26" fill="#8f8a80"/><polygon points="41,24 56,22.5 56,44 41,44" fill="#2a5ab8"/><ellipse cx="45" cy="29" rx="2.2" ry="3.4" fill="#f0c030" transform="rotate(-29 45 29)"/><ellipse cx="51" cy="34" rx="2.4" ry="4" fill="#f0a828" transform="rotate(15 51 34)"/><ellipse cx="47" cy="39" rx="3" ry="2.4" fill="#e85a2a" transform="rotate(13 47 39)"/><ellipse cx="53" cy="27" rx="2" ry="2.6" fill="#e8d040" transform="rotate(-32 53 27)"/><ellipse cx="44" cy="36" rx="1.6" ry="2.6" fill="#d83a2a" transform="rotate(-10 44 36)"/><ellipse cx="50" cy="42" rx="3" ry="1.6" fill="#f0b030" transform="rotate(-29 50 42)"/><ellipse cx="43.5" cy="42" rx="1.6" ry="1.6" fill="#38a868" transform="rotate(30 43.5 42)"/><polygon points="42,15.4 90,1.6 90,13.6 42,24.2" fill="#c08c4e"/><polygon points="42,15.4 90,1.6 90,3 42,16.6" fill="#d8a868"/></g><text transform="translate(46 21.6) rotate(-15.5) skewX(-6)" font-family="Liberation Sans,sans-serif" font-weight="700" font-size="8.6" fill="#fff" textLength="34" lengthAdjust="spacingAndGlyphs">FOOD TO GO</text><g filter="url(#sb)"><polygon points="-2,38 90,43 90,50 -2,44" fill="#5e5040"/><polygon points="1,41 32,40 32,64 1,60" fill="#b87a34"/><polygon points="3,42.5 30,42.1 30,45.7 3,45.9" fill="#e4ae62"/><polygon points="3,45.9 30,45.7 30,46.9 3,47.3" fill="#8a5a2a"/><polygon points="3,47.5 30,47.1 30,50.7 3,50.9" fill="#e4ae62"/><polygon points="3,50.9 30,50.7 30,51.9 3,52.3" fill="#8a5a2a"/><polygon points="3,52.5 30,52.1 30,55.7 3,55.9" fill="#e4ae62"/><polygon points="3,55.9 30,55.7 30,56.9 3,57.3" fill="#8a5a2a"/><polygon points="3,57.5 30,57.1 30,60.7 3,60.9" fill="#e4ae62"/><polygon points="3,60.9 30,60.7 30,61.9 3,62.3" fill="#8a5a2a"/><rect x="0" y="40" width="2.4" height="24" fill="#e0b070"/><rect x="12" y="57" width="6" height="7" fill="#e8dcc0"/><rect x="20" y="58" width="7" height="5" fill="#3a342c"/><polygon points="28,46 90,49 90,90 27,70" fill="#6a6054"/><polygon points="29,47 90,50 90,54 29,50" fill="#6a5a48"/><polygon points="29.0,50.0 38.0,51.3 38.0,54.2 29.0,52.9" fill="#c84a3a"/><polygon points="38.2,51.3 47.2,52.5 47.2,55.5 38.2,54.2" fill="#d86a4a"/><polygon points="47.4,52.6 56.4,53.8 56.4,56.8 47.4,55.5" fill="#b8b098"/><polygon points="56.6,53.9 65.6,55.1 65.6,58.1 56.6,56.8" fill="#8a9a68"/><polygon points="29.5,55.1 38.5,56.3 38.5,59.3 29.5,58.0" fill="#6a8a58"/><polygon points="38.7,56.4 47.7,57.6 47.7,60.6 38.7,59.3" fill="#88a070"/><polygon points="47.9,57.6 56.9,58.9 56.9,61.8 47.9,60.5" fill="#c8c0a0"/><polygon points="57.1,58.9 66.1,60.2 66.1,63.1 57.1,61.8" fill="#b0a888"/><polygon points="30.0,60.1 39.0,61.4 39.0,64.3 30.0,63.0" fill="#c8b890"/><polygon points="39.2,61.4 48.2,62.7 48.2,65.6 39.2,64.3" fill="#a89870"/><polygon points="48.4,62.7 57.4,64.0 57.4,66.9 48.4,65.6" fill="#8aa878"/><polygon points="57.6,64.0 66.6,65.3 66.6,68.2 57.6,66.9" fill="#c0b898"/><polygon points="30.5,65.2 39.5,66.5 39.5,69.4 30.5,68.1" fill="#b8c8a0"/><polygon points="39.7,66.5 48.7,67.8 48.7,70.7 39.7,69.4" fill="#98b080"/><polygon points="48.9,67.8 57.9,69.0 57.9,72.0 48.9,70.7" fill="#c8d0b0"/><polygon points="58.1,69.1 67.1,70.3 67.1,73.3 58.1,72.0" fill="#a8b890"/><polygon points="64.0,53.0 90,57.4 90,64.0 64.0,59.0" fill="#ece8dc"/><polygon points="64.0,59.0 90,64.0 90,65.0 64.0,60.0" fill="#b8b0a0"/><polygon points="64.8,62.5 90,66.9 90,73.5 64.8,68.5" fill="#ece8dc"/><polygon points="64.8,68.5 90,73.5 90,74.5 64.8,69.5" fill="#b8b0a0"/><polygon points="65.6,73.0 90,77.4 90,84.0 65.6,79.0" fill="#ece8dc"/><polygon points="65.6,79.0 90,84.0 90,85.0 65.6,80.0" fill="#b8b0a0"/><polygon points="52,48.5 90,50.6 90,52.2 52,50" fill="#d8d4c8"/><polygon points="27,66 90,84 90,90 60,90 27,72" fill="#3a342e"/><polygon points="27,70.4 72,90 62,90 27,73" fill="#8a7a68"/><polygon points="20,66 28,70 66,90 30,90" fill="#c4b49c"/><polygon points="-2,56 14,62 20,90 -2,90" fill="#d88a2c"/><polygon points="-2,62 11,66 15,90 -2,90" fill="#e8a848"/><ellipse cx="3.6" cy="74" rx="3.4" ry="3" fill="#d8a060"/><ellipse cx="8" cy="80" rx="3.2" ry="2.6" fill="#c88a48"/><ellipse cx="2" cy="83" rx="3" ry="2.4" fill="#e0b070"/><polygon points="0,84 13,81 14,83.4 0,87" fill="#3a2e24"/><polygon points="10,64 13,63 20,90 17,90" fill="#2e2822"/><polygon points="13,62 27,66 30,74 16,74" fill="#8a3a4a"/><ellipse cx="20" cy="68" rx="3" ry="1.8" fill="#a84a58"/><ellipse cx="25" cy="70.5" rx="2.6" ry="1.6" fill="#6a8a3a"/><ellipse cx="24" cy="77" rx="5" ry="2.6" fill="#d8c02c"/><ellipse cx="32" cy="75.5" rx="5" ry="2.4" fill="#c8b428"/><ellipse cx="40" cy="78" rx="5" ry="2.6" fill="#d8c838"/><ellipse cx="28" cy="81.5" rx="5.4" ry="2.6" fill="#e0c830"/><ellipse cx="37" cy="82.4" rx="5" ry="2.4" fill="#c8b020"/><ellipse cx="45" cy="81.5" rx="3.6" ry="2" fill="#d0bc30"/><ellipse cx="21" cy="82" rx="3" ry="2.4" fill="#b8a828"/><polygon points="24,85 56,84 60,90 22,90" fill="#2e4a2a"/><ellipse cx="34" cy="87.6" rx="5" ry="1.6" fill="#4a6a3a"/><ellipse cx="47" cy="87.4" rx="5" ry="1.5" fill="#3a5a30"/></g></svg></div>

<!-- badges -->
<div class="badge" style="top:287px;width:44.5px;background:#f1f6fd;"></div>
<div class="badge" style="top:392.6px;width:44.5px;background:#f1f6fd;"></div>
<div class="badge" style="top:544.6px;width:65.5px;background:#ecf8ee;"></div>

<!-- action buttons -->
<div class="act" style="top:287.1px;"><i></i></div>
<svg style="left:1088.5px;top:295px" width="9" height="7" viewBox="0 0 9 7"><polyline points="0.7,1.9 4.5,4.9 8.3,1.9" fill="none" stroke="#222" stroke-width="1.25"/></svg>
<div class="act" style="top:392.6px;background:#b4b7c0;"><i style="background:#e6e7ea"></i></div>
<svg style="left:1088.5px;top:400.5px" width="9" height="7" viewBox="0 0 9 7"><polyline points="0.7,1.9 4.5,4.9 8.3,1.9" fill="none" stroke="#222" stroke-width="1.25"/></svg>
<div class="act" style="top:544.6px;"><i></i></div>
<svg style="left:1088.5px;top:552.5px" width="9" height="7" viewBox="0 0 9 7"><polyline points="0.7,1.9 4.5,4.9 8.3,1.9" fill="none" stroke="#222" stroke-width="1.25"/></svg>
<div class="rb" style="left:1016.5px;top:388.5px;width:96.7px;height:32.7px;"></div>

<!-- dropdown -->
<div class="b" style="left:952px;top:303px;width:157px;height:82px;background:#fff;box-shadow:0 2px 10px rgba(0,0,0,0.13);"></div>
<svg style="left:1060px;top:338px" width="62" height="13" viewBox="0 0 62 13"><line x1="8" y1="6.45" x2="59.4" y2="6.45" stroke="#e8281e" stroke-width="1.6"/><polygon points="1.6,6.45 10.3,2.2 10.3,10.7" fill="#e8281e"/></svg>

<div id="tx" style="position:absolute;left:0;top:0;width:1280px;height:647px;will-change:transform;">
<span class="t" style="left:15.20px;top:26px;font-size:6.2px;font-weight:700;color:#2f6b2f;letter-spacing:0.292px;">Fresh Mart</span>
<span class="t" style="left:20.20px;top:34px;font-size:3.6px;color:#3d7d3d;letter-spacing:0.342px;">Whole Foods</span>
<span class="t" style="left:115.50px;top:17px;font-size:9.3px;color:#2a2a2a;letter-spacing:0.749px;-webkit-text-stroke:0.2px #2a2a2a;">Blissful Cocoa 10964</span>
<span class="t" style="left:930.10px;top:18px;font-size:9.3px;color:#5c8f5a;letter-spacing:0.736px;">Dashboard</span>
<span class="t" style="left:1004.90px;top:18px;font-size:9.3px;color:#555;letter-spacing:0.486px;">Saved spaces</span>
<span class="t" style="left:1092.40px;top:18px;font-size:9.3px;color:#555;letter-spacing:0.611px;">Messages</span>
<span class="t" style="left:1170.30px;top:18px;font-size:9.3px;color:#555;letter-spacing:0.578px;">Joshua</span>
<span class="t" style="left:109.20px;top:75px;font-size:11px;color:#2a2a2a;letter-spacing:0.670px;-webkit-text-stroke:0.35px #2a2a2a;">Explore</span>
<span class="t" style="left:174.40px;top:75px;font-size:11px;color:#2a2a2a;letter-spacing:0.598px;-webkit-text-stroke:0.35px #2a2a2a;">Proposals</span>
<span class="t" style="left:252.00px;top:75px;font-size:11px;color:#2a2a2a;letter-spacing:1.033px;-webkit-text-stroke:0.35px #2a2a2a;">Campaigns</span>
<span class="t" style="left:339.50px;top:75px;font-size:11px;color:#3a7d34;letter-spacing:1.031px;-webkit-text-stroke:0.35px #3a7d34;">Activations</span>
<span class="t" style="left:427.00px;top:75px;font-size:11px;color:#2a2a2a;letter-spacing:0.799px;-webkit-text-stroke:0.35px #2a2a2a;">Payments</span>
<span class="t" style="left:505.50px;top:75px;font-size:11px;color:#2a2a2a;letter-spacing:1.266px;-webkit-text-stroke:0.35px #2a2a2a;">Commitments</span>
<span class="t" style="left:109.00px;top:140px;font-size:22.9px;font-weight:700;color:#2b2d36;letter-spacing:0.895px;-webkit-text-stroke:0.5px #2b2d36;">Activations</span>
<span class="t" style="left:1050.00px;top:149px;font-size:13.1px;font-weight:700;color:#fff;letter-spacing:0.017px;">Search for spaces</span>
<span class="t" style="left:117.10px;top:218px;font-size:10.1px;color:#b0b0b0;letter-spacing:0.021px;">Search by partner name or keyword</span>
<span class="t" style="left:367.90px;top:218px;font-size:8.8px;color:#333;letter-spacing:0.845px;-webkit-text-stroke:0.35px #333;">All campaigns</span>
<span class="t" style="left:465.60px;top:218px;font-size:8.8px;color:#333;letter-spacing:0.729px;-webkit-text-stroke:0.35px #333;">All statuses</span>
<span class="t" style="left:1100.00px;top:221px;font-size:10.5px;color:#444;letter-spacing:0.581px;">Sort by</span>
<span class="t" style="left:109.00px;top:267px;font-size:8.8px;color:#8a8f98;letter-spacing:0.800px;">2 Active</span>
<span class="t" style="left:109.00px;top:525px;font-size:8.8px;color:#8a8f98;letter-spacing:0.766px;">10 Completed</span>
<span class="t" style="left:223.00px;top:292px;font-size:11.8px;color:#222;letter-spacing:0.898px;-webkit-text-stroke:0.25px #222;">Fridge Door Decal - Beverage</span>
<span class="t" style="left:223.00px;top:311px;font-size:7.8px;color:#888;letter-spacing:0.336px;-webkit-text-stroke:0.1px #888;">in LOS ANGELES</span>
<span class="t" style="left:223.00px;top:332px;font-size:8.9px;color:#666;letter-spacing:0.673px;">Fridge Decals • Blissful Cocoa</span>
<span class="t" style="left:602.00px;top:297px;font-size:8.2px;color:#9bbdf0;letter-spacing:0.000px;-webkit-text-stroke:0.3px #9bbdf0;transform:scaleX(0.9631);transform-origin:0.00px 0;">ACTIVE</span>
<span class="t" style="left:754.25px;top:291px;font-size:8.8px;font-weight:700;color:#333;letter-spacing:0.942px;">Date</span>
<span class="t" style="left:779.25px;top:291px;font-size:8.8px;color:#555;letter-spacing:0.471px;">01 Jul - 31 Jul, 2024</span>
<span class="t" style="left:754.25px;top:307px;font-size:8.8px;font-weight:700;color:#333;letter-spacing:0.592px;">Total Cost</span>
<span class="t" style="left:805.75px;top:307px;font-size:8.8px;color:#555;letter-spacing:0.694px;">$93.75 (inc. tax)</span>
<span class="t" style="left:1028.20px;top:295px;font-size:7.6px;color:#333;letter-spacing:0.449px;-webkit-text-stroke:0.35px #333;">Actions</span>
<span class="t" style="left:223.00px;top:398px;font-size:11.8px;color:#222;letter-spacing:1.097px;-webkit-text-stroke:0.25px #222;">Social Media - Silver Package (video)</span>
<span class="t" style="left:223.00px;top:416px;font-size:7.8px;color:#888;letter-spacing:0.336px;-webkit-text-stroke:0.1px #888;">in LOS ANGELES</span>
<span class="t" style="left:223.00px;top:438px;font-size:8.9px;color:#666;letter-spacing:0.752px;">Social Video Sponsorship • Blissful Cocoa</span>
<span class="t" style="left:602.00px;top:403px;font-size:8.2px;color:#9bbdf0;letter-spacing:0.000px;-webkit-text-stroke:0.3px #9bbdf0;transform:scaleX(0.9631);transform-origin:0.00px 0;">ACTIVE</span>
<span class="t" style="left:754.25px;top:396px;font-size:8.8px;font-weight:700;color:#333;letter-spacing:0.942px;">Date</span>
<span class="t" style="left:779.25px;top:396px;font-size:8.8px;color:#555;letter-spacing:0.471px;">01 Jul - 31 Jul, 2024</span>
<span class="t" style="left:754.25px;top:412px;font-size:8.8px;font-weight:700;color:#333;letter-spacing:0.592px;">Total Cost</span>
<span class="t" style="left:805.75px;top:412px;font-size:8.8px;color:#555;letter-spacing:0.678px;">$1,500.00 (inc. tax)</span>
<span class="t" style="left:1028.20px;top:400px;font-size:7.6px;color:#333;letter-spacing:0.449px;-webkit-text-stroke:0.35px #333;">Actions</span>
<span class="t" style="left:222.00px;top:550px;font-size:11.8px;color:#222;letter-spacing:1.227px;-webkit-text-stroke:0.25px #222;">In-store Audio - Afternoon</span>
<span class="t" style="left:223.00px;top:568px;font-size:7.8px;color:#888;letter-spacing:0.336px;-webkit-text-stroke:0.1px #888;">in LOS ANGELES</span>
<span class="t" style="left:223.00px;top:590px;font-size:8.9px;color:#666;letter-spacing:0.711px;">In-Store Audio • Blissful Cocoa</span>
<span class="t" style="left:602.00px;top:555px;font-size:8.2px;color:#5fc46a;letter-spacing:0.000px;-webkit-text-stroke:0.3px #5fc46a;transform:scaleX(0.9894);transform-origin:0.00px 0;">COMPLETED</span>
<span class="t" style="left:754.25px;top:548px;font-size:8.8px;font-weight:700;color:#333;letter-spacing:0.942px;">Date</span>
<span class="t" style="left:779.25px;top:548px;font-size:8.8px;color:#555;letter-spacing:0.612px;">02 Jun - 01 Jul, 2024</span>
<span class="t" style="left:754.25px;top:564px;font-size:8.8px;font-weight:700;color:#333;letter-spacing:0.592px;">Total Cost</span>
<span class="t" style="left:805.75px;top:564px;font-size:8.8px;color:#555;letter-spacing:0.689px;">$150.00 (inc. tax)</span>
<span class="t" style="left:1028.20px;top:552px;font-size:7.6px;color:#333;letter-spacing:0.449px;-webkit-text-stroke:0.35px #333;">Actions</span>
<span class="t" style="left:960.00px;top:316px;font-size:9.4px;color:#4a4a4a;letter-spacing:0.267px;">View details</span>
<span class="t" style="left:960.00px;top:339px;font-size:9.4px;color:#4a4a4a;letter-spacing:0.369px;">Message partner</span>
<span class="t" style="left:960.00px;top:361px;font-size:9.4px;color:#4a4a4a;letter-spacing:0.276px;">View report</span>
</div>
</body>
</html>
